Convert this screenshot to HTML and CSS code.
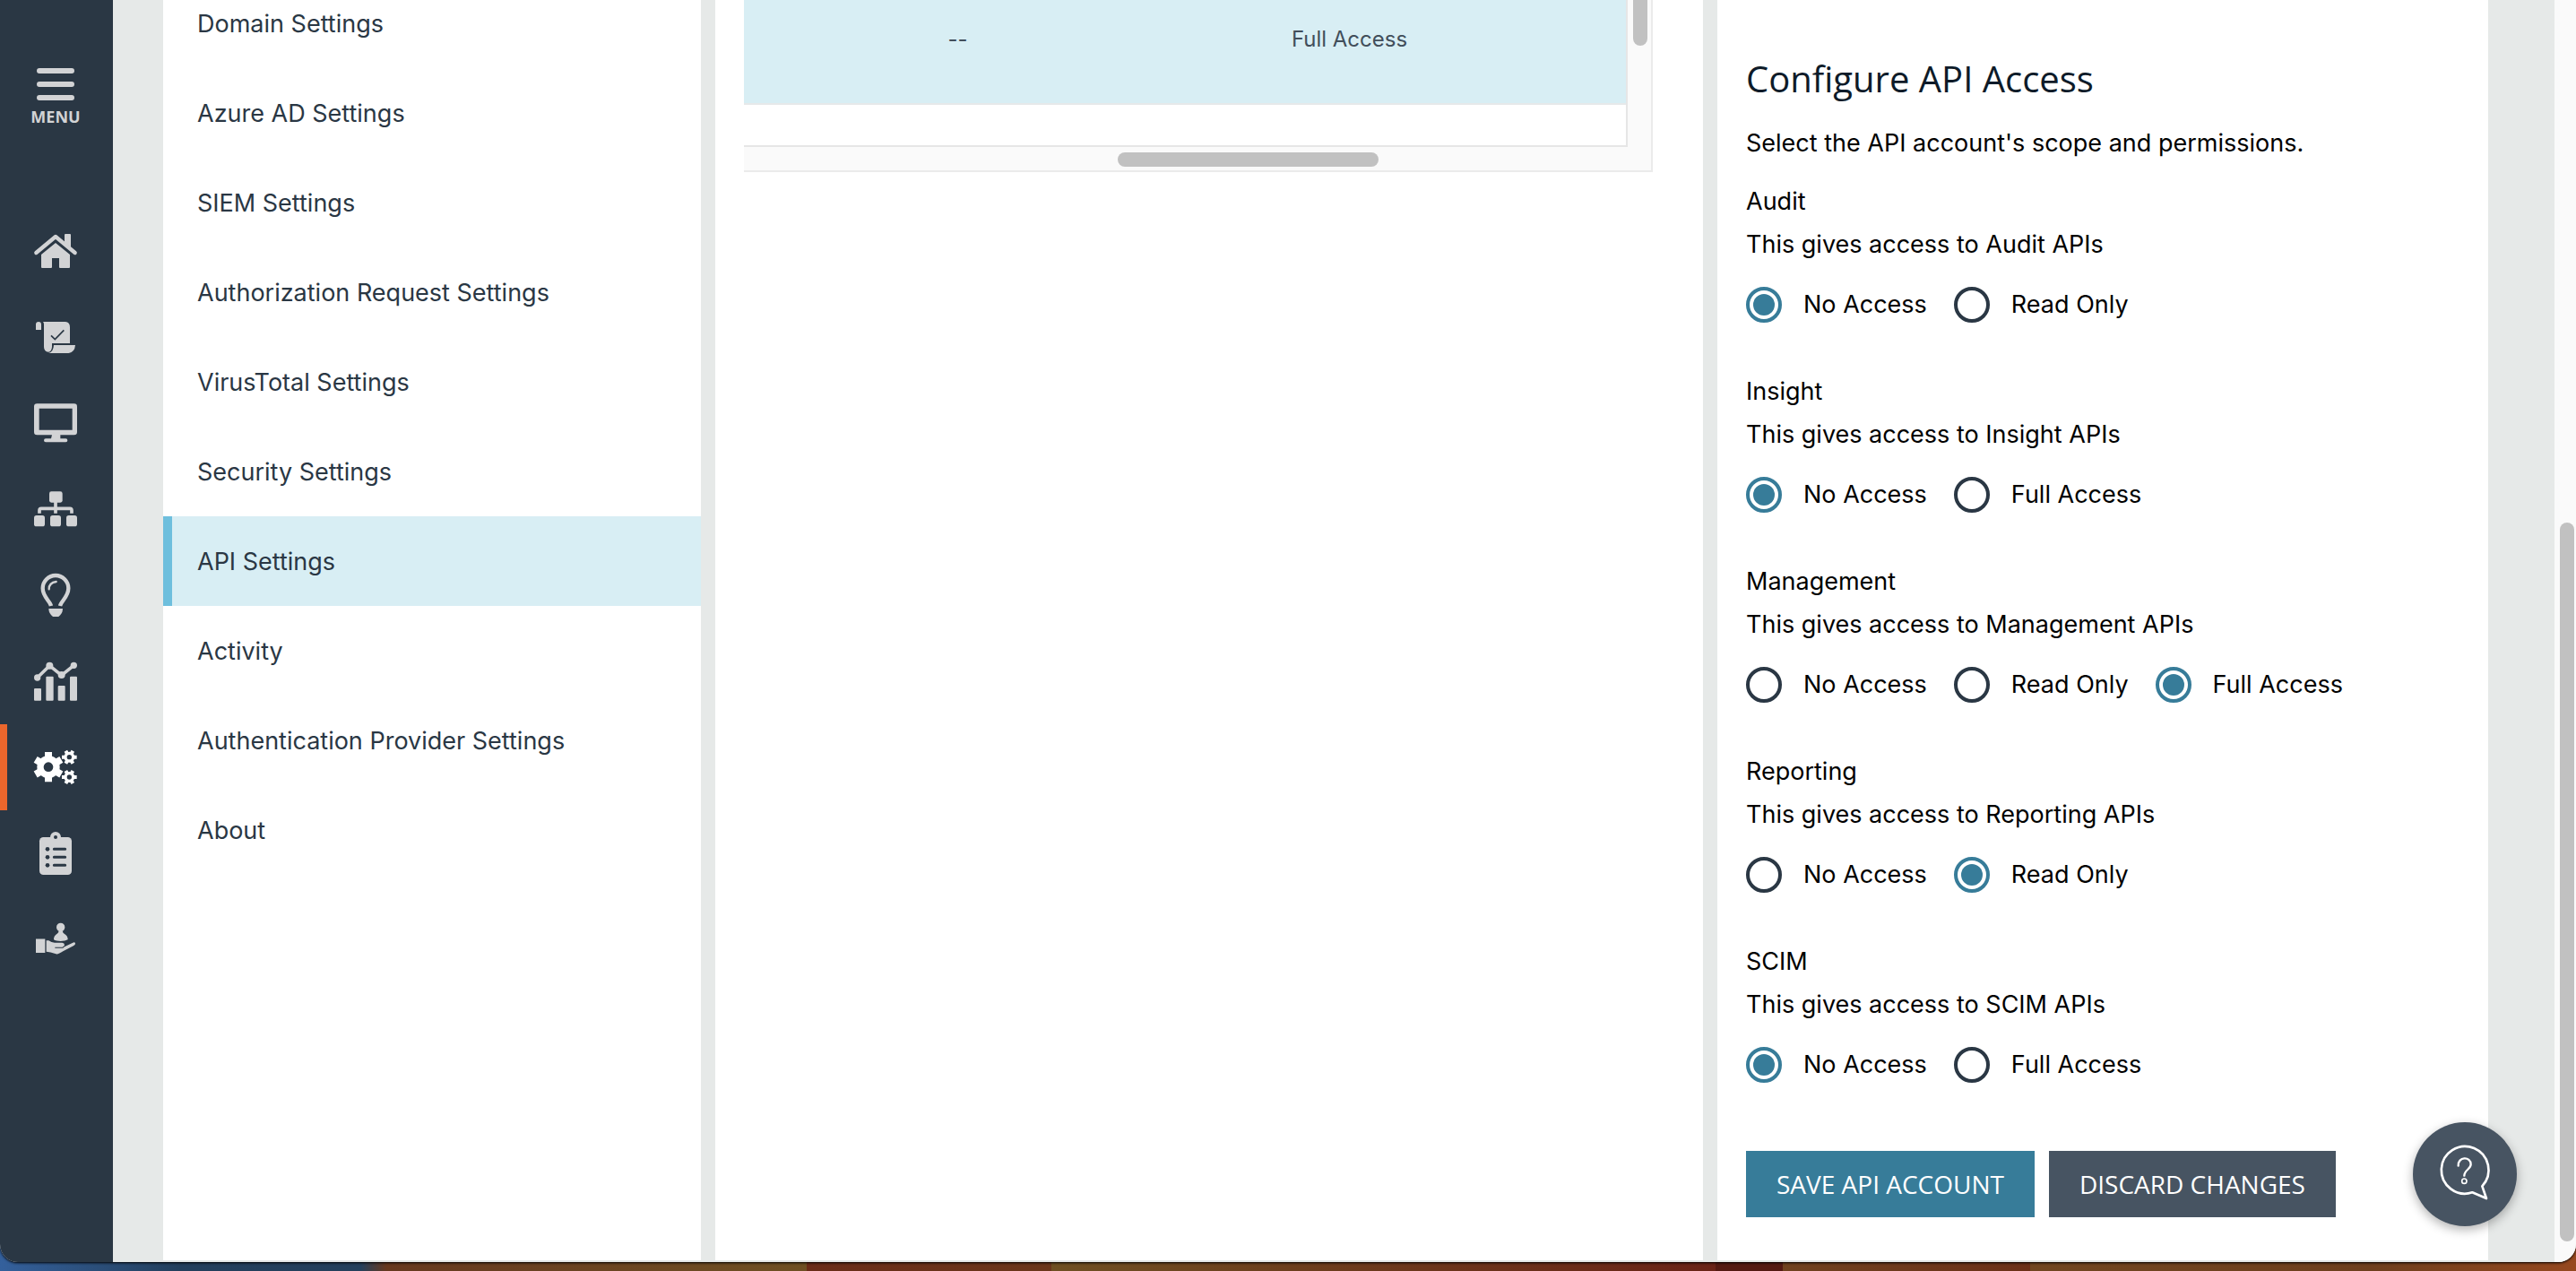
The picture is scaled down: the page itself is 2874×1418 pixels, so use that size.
FILE: index.html
```html
<!DOCTYPE html>
<html lang="en">
<head>
<meta charset="utf-8">
<meta name="viewport" content="width=device-width, initial-scale=1">
<title>API Settings</title>
<link rel="stylesheet" href="styles.css">
</head>
<body>
<div class="app">
  <aside class="sidebar">
    <button class="menu-toggle" type="button">
      <svg class="menu-icon" viewBox="0 0 42 36" aria-hidden="true"><path d="M3 3h36M3 18h36M3 33h36"/></svg>
      <span>MENU</span>
    </button>
    <nav class="rail" aria-label="Main">
      <a class="rail-link" href="#home" aria-label="Home">
        <svg class="icon" viewBox="0 0 144 144"><path class="line" stroke-width="13" stroke-linecap="round" stroke-linejoin="round" d="M7 78 72 24l65 54"/><path d="M102 18q0-3 3-3h15q3 0 3 3v42l-21-17ZM72 45l48 39v42q0 3-3 3H87q-3 0-3-3V96H60v30q0 3-3 3H27q-3 0-3-3V84Z"/></svg>
      </a>
      <a class="rail-link" href="#policies" aria-label="Policies">
        <svg class="icon" viewBox="0 0 144 144"><path d="M6 48V30q0-9 9-9t9 9v18ZM30 21h75q15 2 15 18v54H60v12q-1 16-12 17-15-1-15-17V30q0-6-3-9ZM66 99h72q-2 24-22 27H48q17-4 18-27Z"/><path class="cut" stroke-width="5" d="m57 67 13 13 30-31"/></svg>
      </a>
      <a class="rail-link" href="#computers" aria-label="Computers">
        <svg class="icon" viewBox="0 0 144 144"><path fill-rule="evenodd" d="M10 7h124q10 0 10 10v85q0 10-10 10H88v12h18q6 0 6 6t-6 6H39q-6 0-6-6t6-6h18l3-12H10q-10 0-10-10V17Q0 7 10 7Zm7 16v72h111V23Z"/></svg>
      </a>
      <a class="rail-link" href="#groups" aria-label="Groups">
        <svg class="icon" viewBox="0 0 144 144"><rect x="51" y="13" width="44" height="37" rx="7"/><rect y="93" width="36" height="37" rx="8"/><rect x="54" y="93" width="36" height="37" rx="8"/><rect x="108" y="93" width="36" height="37" rx="8"/><path class="line" stroke-width="11" d="M72 46v40M18 86V76q0-6 6-6h96q6 0 6 6v10"/></svg>
      </a>
      <a class="rail-link" href="#insights" aria-label="Insights">
        <svg class="icon" viewBox="0 0 144 144"><path class="line" stroke-width="13" d="M57 108C54 92 29 78 29 49a43 43 0 0 1 86 0c0 29-25 43-28 59"/><path class="line" stroke-width="7" stroke-linecap="round" d="M50 52q0-22 24-25"/><path d="M49 117h47q0 16-14 27H63q-14-11-14-27Z"/></svg>
      </a>
      <a class="rail-link" href="#reports" aria-label="Reports">
        <svg class="icon" viewBox="0 0 144 144"><path class="line" stroke-width="11" d="m11 60 41-40 40 32 41-33"/><circle cx="11" cy="60" r="11"/><circle cx="52" cy="20" r="12"/><circle cx="92" cy="51" r="12"/><circle cx="133" cy="19" r="11"/><rect y="96" width="24" height="41" rx="3"/><rect x="40" y="56" width="25" height="81" rx="3"/><rect x="80" y="87" width="24" height="50" rx="3"/><rect x="120" y="56" width="24" height="81" rx="3"/></svg>
      </a>
      <a class="rail-link rail-link-active" href="#configuration" aria-label="Configuration" aria-current="page">
        <svg class="icon" viewBox="0 0 144 144"><circle cx="48" cy="71" r="38"/><path class="line" stroke-width="24" d="M48 21v100M5 46l86 50M5 96l86-50"/><circle class="hole" cx="48" cy="71" r="16"/><circle cx="118" cy="38" r="18"/><path class="line" stroke-width="12" d="M93 38h50M106 17l24 42M130 17l-24 42"/><circle class="hole" cx="118" cy="38" r="8"/><circle cx="118" cy="105" r="18"/><path class="line" stroke-width="12" d="M93 105h50M106 84l24 42M130 84l-24 42"/><circle class="hole" cx="118" cy="105" r="8"/></svg>
      </a>
      <a class="rail-link" href="#audit" aria-label="Audit">
        <svg class="icon" viewBox="0 0 144 144"><circle cx="72" cy="18" r="18"/><rect x="18" y="18" width="108" height="126" rx="13"/><circle class="hole" cx="72" cy="18" r="6"/><circle class="hole" cx="45" cy="58" r="7"/><circle class="hole" cx="45" cy="85" r="7"/><circle class="hole" cx="45" cy="112" r="7"/><path class="cut" stroke-width="9" stroke-linecap="round" d="M67 58h37M67 85h37M67 112h37"/></svg>
      </a>
      <a class="rail-link" href="#requests" aria-label="Requests">
        <svg class="icon" viewBox="0 0 144 144"><g transform="translate(0 13) scale(1 1.03)"><path d="M6 56h31v45H6ZM41 61h8q9 7 20 7h25q8 1 8 8 0 3-2 6l30-14q6-3 8 2 1 5-5 8l-36 18q-18 12-26 8-16-6-30-7ZM82 31h14q-1 4 4 7 14 8 13 20-8 5-24 5t-23-5q-1-12 12-20 5-3 4-7Z"/><circle cx="89" cy="18" r="14"/><path class="cut" stroke-width="3" d="M70 84h26l6-5"/></g></svg>
      </a>
    </nav>
  </aside>

  <main class="workspace">
    <nav class="settings-nav" aria-label="Settings">
      <a class="settings-link" href="#domain">Domain Settings</a>
      <a class="settings-link" href="#azure">Azure AD Settings</a>
      <a class="settings-link" href="#siem">SIEM Settings</a>
      <a class="settings-link" href="#authorization">Authorization Request Settings</a>
      <a class="settings-link" href="#virustotal">VirusTotal Settings</a>
      <a class="settings-link" href="#security">Security Settings</a>
      <a class="settings-link settings-link-active" href="#api" aria-current="page">API Settings</a>
      <a class="settings-link" href="#activity">Activity</a>
      <a class="settings-link" href="#authentication">Authentication Provider Settings</a>
      <a class="settings-link" href="#about">About</a>
    </nav>

    <section class="accounts">
      <div class="grid-frame">
        <div class="grid-view">
          <table class="grid-table">
            <colgroup><col class="col-lead"><col><col><col class="col-tail"></colgroup>
            <tbody><tr><td></td><td>--</td><td>Full Access</td><td></td></tr></tbody>
          </table>
        </div>
        <div class="track-y"><div class="thumb-y"></div></div>
        <div class="track-x"><div class="thumb-x"></div></div>
      </div>
    </section>

    <form class="access">
      <h2 class="access-title">Configure API Access</h2>
      <p class="access-intro">Select the API account's scope and permissions.</p>

      <fieldset class="scope">
        <legend>Audit</legend>
        <p>This gives access to Audit APIs</p>
        <div class="options">
          <label class="option"><input type="radio" name="audit" checked>No Access</label>
          <label class="option"><input type="radio" name="audit">Read Only</label>
        </div>
      </fieldset>
      <fieldset class="scope">
        <legend>Insight</legend>
        <p>This gives access to Insight APIs</p>
        <div class="options">
          <label class="option"><input type="radio" name="insight" checked>No Access</label>
          <label class="option"><input type="radio" name="insight">Full Access</label>
        </div>
      </fieldset>
      <fieldset class="scope">
        <legend>Management</legend>
        <p>This gives access to Management APIs</p>
        <div class="options">
          <label class="option"><input type="radio" name="management">No Access</label>
          <label class="option"><input type="radio" name="management">Read Only</label>
          <label class="option"><input type="radio" name="management" checked>Full Access</label>
        </div>
      </fieldset>
      <fieldset class="scope">
        <legend>Reporting</legend>
        <p>This gives access to Reporting APIs</p>
        <div class="options">
          <label class="option"><input type="radio" name="reporting">No Access</label>
          <label class="option"><input type="radio" name="reporting" checked>Read Only</label>
        </div>
      </fieldset>
      <fieldset class="scope">
        <legend>SCIM</legend>
        <p>This gives access to SCIM APIs</p>
        <div class="options">
          <label class="option"><input type="radio" name="scim" checked>No Access</label>
          <label class="option"><input type="radio" name="scim">Full Access</label>
        </div>
      </fieldset>

      <div class="actions">
        <button class="button button-primary" type="submit">SAVE API ACCOUNT</button>
        <button class="button" type="reset">DISCARD CHANGES</button>
      </div>
    </form>
  </main>

  <div class="page-track"><div class="page-thumb"></div></div>

  <button class="help" type="button" aria-label="Help">
    <svg viewBox="54 66 348 348" aria-hidden="true"><path stroke-width="8" stroke-linejoin="round" d="M286 280A79 79 0 1 0 253 301L300 321Z"/><path stroke-width="7" stroke-linecap="round" d="M206 212C204 180 248 179 248 207 248 223 226 226 226 245"/><circle stroke-width="5" cx="226" cy="263" r="8"/></svg>
  </button>
</div>
</body>
</html>
```
FILE: styles.css
```css
* { box-sizing: border-box; }

:root {
  --navy: #2a3744;
  --teal: #377c99;
  --slate: #475462;
  --gutter: #e6e9e8;
  --selected: #d8eef4;
  --thumb: #c1c1c1;
  --track: #fafafa;
}

body {
  margin: 0;
  min-height: 100vh;
  display: flex;
  flex-direction: column;
  padding-bottom: 10px;
  overflow: hidden;
  font: 27px/48px Inter, "Noto Sans", sans-serif;
  color: #000;
  background: linear-gradient(90deg,
    #34609c 0%, #233f5c 7%, #24405c 14%,
    #67391f 15%, #6f5023 31.3%,
    #6a2c18 31.3%, #6b371b 40.8%,
    #6f5022 40.8%, #6d3f1d 50%, #6a2317 66.6%,
    #541a12 66.6%, #541a12 69.2%,
    #70421f 69.2%, #6c3018 78.8%,
    #714620 78.8%, #6e3f1d 92%, #96481f 100%);
}

p, h2 { margin: 0; }

.app {
  position: relative;
  flex: 1;
  display: flex;
  overflow: hidden;
  border-radius: 0 0 20px 20px;
  background: var(--gutter);
  box-shadow: 0 1px 3px #000;
}

/* Main navigation rail */
.sidebar {
  flex: 0 0 126px;
  padding-top: 76px;
  background: var(--navy);
}

.menu-toggle {
  display: flex;
  flex-direction: column;
  align-items: center;
  gap: 6px;
  width: 100%;
  margin-bottom: 90px;
  padding: 0 2px 0 0;
  border: 0;
  background: none;
  color: #d2d3d5;
  font: bold 18px/24px "Open Sans", sans-serif;
}

.menu-icon { width: 42px; height: 36px; stroke: currentColor; stroke-width: 6; stroke-linecap: round; }

.rail-link {
  display: flex;
  align-items: center;
  justify-content: center;
  height: 96px;
  padding-right: 2px;
  color: #d2d3d5;
}

.rail-link-active { padding-right: 10px; border-left: 8px solid #eb662c; color: #fff; }

.icon { width: 48px; height: 48px; overflow: visible; fill: currentColor; }
.icon .line { fill: none; stroke: currentColor; }
.icon .cut { fill: none; stroke: var(--navy); }
.icon .hole { fill: var(--navy); }

/* Three content columns */
.workspace {
  flex: 1;
  display: grid;
  grid-template-columns: 600fr 1102fr 860fr;
  gap: 16px;
  padding: 0 74px 2px 56px;
}

.settings-nav, .accounts, .access { min-width: 0; background: #fff; }

/* The list is scrolled part-way through its first entry */
.settings-nav { overflow: hidden; }
.settings-link:first-child { margin-top: -24px; }

.settings-link {
  display: flex;
  align-items: center;
  height: 100px;
  padding: 2px 0 0 38px;
  color: var(--navy);
  text-decoration: none;
}

.settings-link-active {
  padding-left: 28px;
  border-left: 10px solid #6ebfdd;
  background: var(--selected);
}

/* Accounts grid */
.grid-frame {
  display: grid;
  grid-template-columns: 1fr 26px;
  grid-template-rows: 164px 26px;
  margin: 0 56px 0 32px;
  border: solid #ebebeb;
  border-width: 0 2px 2px 0;
  background: var(--track);
}

.grid-view {
  overflow: hidden;
  border: solid #e6e6e6;
  border-width: 0 2px 2px 0;
  background: #fff;
}

.grid-table {
  width: 100%;
  table-layout: fixed;
  border-collapse: collapse;
  font-size: 24px;
  color: #424e5b;
}

.grid-table td {
  height: 116px;
  padding: 0 0 28px;
  border-bottom: 2px solid #e6e9ea;
  background: var(--selected);
  text-align: center;
}

.col-lead { width: 20px; }
.col-tail { width: 90px; }

.track-y { padding: 0 4px 0 6px; }
.thumb-y { height: 51px; border-radius: 0 0 8px 8px; background: var(--thumb); }
.track-x { grid-column: 1 / -1; padding: 6px 304px 0 417px; }
.thumb-x { height: 16px; border-radius: 8px; background: var(--thumb); }

/* API access form */
.access { padding: 60px 32px 48px; }

.access-title {
  margin-bottom: 20px;
  font: 400 40px/56px "Open Sans", sans-serif;
  color: #0e1b29;
}

.access-intro { margin-bottom: 17px; }

.scope { min-width: 0; margin: 0 0 53px; padding: 0; border: 0; }
.scope legend { padding: 0; }

.options { display: flex; flex-wrap: wrap; gap: 30px; margin-top: 23px; }

.option { display: flex; align-items: center; gap: 24px; line-height: 40px; }

.option input {
  appearance: none;
  width: 40px;
  height: 40px;
  margin: 0;
  border: 4px solid var(--navy);
  border-radius: 50%;
  background: #fff;
}

.option input:checked {
  padding: 4px;
  border-color: var(--teal);
  background: var(--teal) content-box;
}

.actions { display: flex; gap: 16px; margin-top: 76px; }

.button {
  height: 74px;
  padding: 0 34px;
  border: 0;
  background: var(--slate);
  color: #fff;
  font: 28px/40px "Open Sans", sans-serif;
}

.button-primary { background: var(--teal); }

/* Page scrollbar */
.page-track {
  flex: 0 0 24px;
  display: flex;
  padding: 583px 2px 23px 6px;
  background: var(--track);
}

.page-thumb { flex: 1; border-radius: 8px; background: var(--thumb); }

.help {
  position: absolute;
  right: 66px;
  bottom: 40px;
  width: 116px;
  height: 116px;
  padding: 0;
  border: 0;
  border-radius: 50%;
  background: var(--slate);
  box-shadow: 0 4px 12px rgba(0, 0, 0, .3);
}

.help svg { display: block; fill: none; stroke: #fff; }
```
